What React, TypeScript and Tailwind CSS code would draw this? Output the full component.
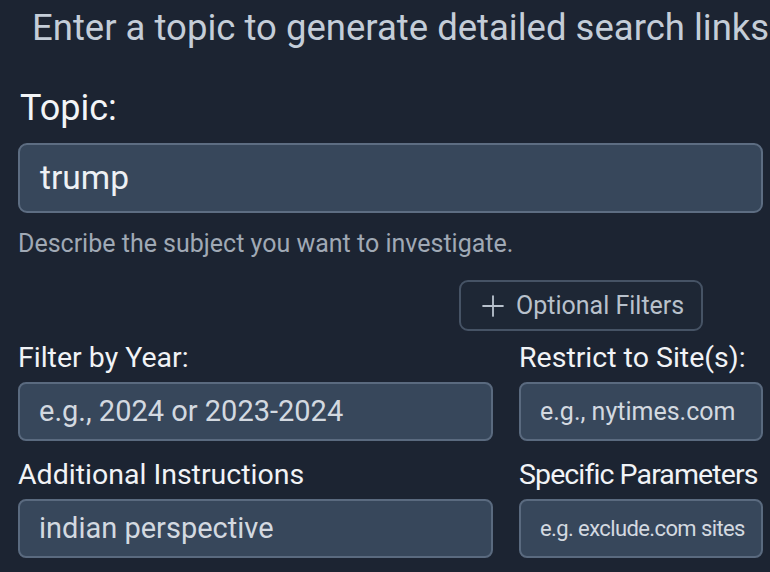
import { Plus } from "lucide-react";

const font = { fontFamily: "Roboto, 'Noto Sans', sans-serif" };

const Field = ({
  label,
  value,
  valueClass,
  labelClass = "",
}: {
  label: string;
  value: string;
  valueClass: string;
  labelClass?: string;
}) => (
  <div className="flex flex-col min-w-0">
    <div className={`text-[28.5px] leading-[34px] text-[#f1f3f6] whitespace-nowrap ${labelClass}`}>{label}</div>
    <div className="mt-[7px] h-[59px] w-full rounded-[8px] border-2 border-[#5a6a7f] bg-[#37475b] flex items-center px-[19px] overflow-hidden">
      <span className={`text-[#d3d9e0] whitespace-nowrap ${valueClass}`}>{value}</span>
    </div>
  </div>
);

const App = () => {
  return (
    <div className="w-[770px] h-[572px] overflow-hidden bg-[#1c2432]" style={font}>
      <div className="w-[763px] pl-[18px]">
        <h1 className="pt-[4px] pl-[14px] text-[36.5px] leading-[48px] text-[#c4cdd8] whitespace-nowrap">
          Enter a topic to generate detailed search links
        </h1>

        <div className="mt-[36px] pl-[2px] text-[36px] leading-[40px] text-[#f3f5f7]">Topic:</div>
        <div className="mt-[15px] h-[70px] rounded-[9px] border-2 border-[#5d6d82] bg-[#37475b] flex items-center px-[20px]">
          <span className="text-[33.5px] text-[#eef1f4]">trump</span>
        </div>
        <p className="mt-[16px] text-[25px] leading-[30px] text-[#a0a9b5]">
          Describe the subject you want to investigate.
        </p>

        <div className="mt-[21px] flex">
          <button className="ml-[441px] h-[51px] w-[244px] rounded-[9px] border-2 border-[#465365] bg-[#1e2735] flex items-center gap-[6px] pl-[15px] text-[25px] text-[#b8c1cc] whitespace-nowrap">
            <Plus className="w-[34px] h-[34px] shrink-0" strokeWidth={1.3} />
            <span>Optional Filters</span>
          </button>
        </div>

        <div className="mt-[10px] grid grid-cols-[475px_244px] gap-x-[26px] gap-y-[17px]">
          <Field label="Filter by Year:" value="e.g., 2024 or 2023-2024" valueClass="text-[29px]" />
          <Field label="Restrict to Site(s):" value="e.g., nytimes.com" valueClass="text-[25px]" />
          <Field label="Additional Instructions" value="indian perspective" valueClass="text-[29px]" />
          <Field
            label="Specific Parameters"
            value="e.g. exclude.com sites"
            valueClass="text-[22px] tracking-[-0.6px]"
            labelClass="tracking-[-0.9px]"
          />
        </div>
      </div>
    </div>
  );
};

export default App;
